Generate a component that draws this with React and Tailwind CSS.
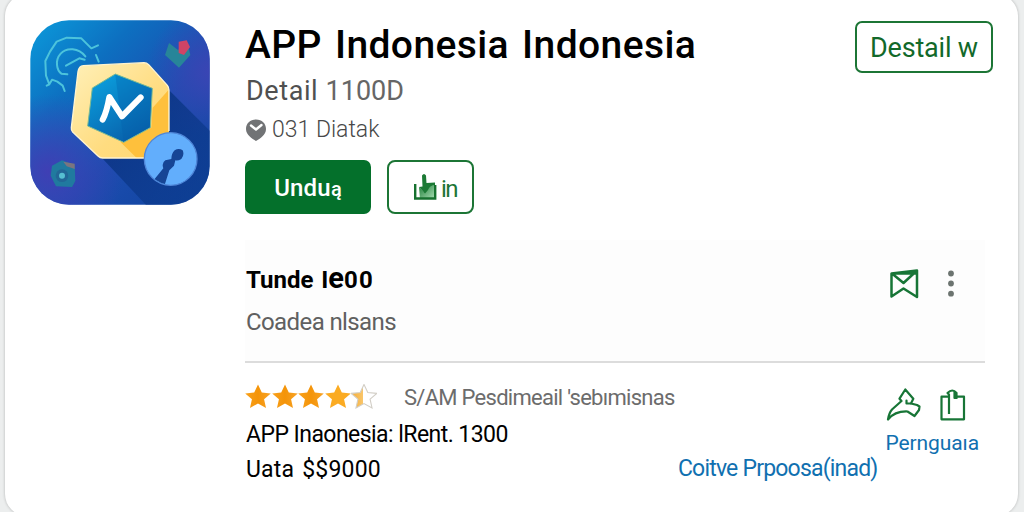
import React from "react";

function AppIcon() {
  return (
    <svg viewBox="30 29 540 555" className="mt-px h-[185px] w-[180px] shrink-0">
      <defs>
        <linearGradient id="bg" x1="0" y1="0" x2="1" y2="1">
          <stop offset="0" stopColor="#0b9bdb" />
          <stop offset="0.3" stopColor="#0d6fc0" />
          <stop offset="0.6" stopColor="#1c4db0" />
          <stop offset="1" stopColor="#0f439c" />
        </linearGradient>
        <radialGradient id="violet" cx="0.1" cy="0.82" r="0.42">
          <stop offset="0" stopColor="#3f3fb4" />
          <stop offset="1" stopColor="#3f3fb4" stopOpacity="0" />
        </radialGradient>
        <radialGradient id="violetRight" cx="1" cy="0.28" r="0.35">
          <stop offset="0" stopColor="#3a45b4" />
          <stop offset="1" stopColor="#3a45b4" stopOpacity="0" />
        </radialGradient>
        <linearGradient id="gold" x1="0" y1="0" x2="1" y2="1">
          <stop offset="0" stopColor="#fff0b8" />
          <stop offset="0.6" stopColor="#ffdc80" />
          <stop offset="1" stopColor="#ffd873" />
        </linearGradient>
        <linearGradient id="hex" x1="0" y1="0" x2="0.6" y2="1">
          <stop offset="0" stopColor="#0ba5e2" />
          <stop offset="1" stopColor="#0862ac" />
        </linearGradient>
        <linearGradient id="shade" x1="0" y1="0" x2="1" y2="1">
          <stop offset="0" stopColor="#0a327f" />
          <stop offset="1" stopColor="#0b3a8c" stopOpacity="0.5" />
        </linearGradient>
        <clipPath id="tile"><rect x="31" y="30" width="538" height="553" rx="116" /></clipPath>
        <clipPath id="ball"><circle cx="452" cy="446" r="77" /></clipPath>
      </defs>
      <g clipPath="url(#tile)">
        <rect x="30" y="29" width="540" height="555" fill="url(#bg)" />
        <rect x="30" y="29" width="540" height="555" fill="url(#violet)" />
        <rect x="30" y="29" width="540" height="555" fill="url(#violetRight)" />
        <path d="M446 238L570 362V584H378L246 443Z" fill="url(#shade)" />
        <g fill="none" stroke="#4cc3dc" strokeWidth="6" strokeLinecap="round" strokeLinejoin="round">
          <path d="M234 105L214 114L184 84L140 82L110 94L90 124L76 152L78 196L88 222L80 226M88 222L96 208L112 214L128 226L134 242" />
          <path d="M196 138C176 112 140 110 122 130C104 150 110 180 124 190L142 192" />
          <path d="M138 166L160 154L178 144L194 148M228 134L236 154" />
        </g>
        <path d="M447 98l26 20 32-8 6 24-34 38-42-38Z" fill="#278599" />
        <path d="M476 94l24-4 10 20-18 24-16-6Z" fill="#d04466" />
        <path d="M126 450l38 14 2 48-10 18-48-2-16-32 4-30Z" fill="#207a9f" />
        <path d="M130 454l34 6v16l-24-8Z" fill="#7b757f" />
        <circle cx="126" cy="496" r="19" fill="#226797" />
        <circle cx="126" cy="496" r="9" fill="#56bfd2" />
        <path d="M190 166l182-9q8 0 14 6l56 62q5 5 5 12v206H248q-8 0-14-6l-76-72q-5-5-4-13l20-168q3-17 16-18Z" fill="url(#gold)" />
        <path d="M446 238v205H350l-48-47 92-44 4-60Z" fill="#fec03c" />
        <path d="M447 362V240q0-9-5-15l-56-62q-6-6-14-6l-182 9q-13 1-16 18l-20 168q-1 8 4 13l76 72q6 6 14 6h126" fill="none" stroke="#fff4cf" strokeWidth="4" />
        <path d="M286 191l111 43-6 118-80 44-108-49 14-114Z" fill="url(#hex)" stroke="#7bb992" strokeWidth="3" />
        <path d="M286 193l109 42-6 115-78 44Z" fill="#045da9" opacity=".3" />
        <path d="M248 328q12-22 20-68l38 58 56-57" fill="none" stroke="#fff" strokeWidth="18" strokeLinecap="round" strokeLinejoin="round" />
        <circle cx="452" cy="446" r="79" fill="#62aefc" stroke="#4f86d8" strokeWidth="4" />
        <g clipPath="url(#ball)">
          <path d="M396 516L430 474Q424 458 436 450L454 446Q454 430 464 420Q476 412 488 420Q494 434 484 446Q474 452 466 450L462 466L448 480L432 530Z" fill="#164595" />
        </g>
      </g>
    </svg>
  );
}

const STAR = "M12 .4l3.500 7.700 8.300.9-6.200 5.600 1.800 8.400-7.400-4.300-7.400 4.300 1.800-8.400L.2 9l8.300-.9z";

function Stars() {
  return (
    <div className="flex w-[133px] gap-[0.5px]">
      <svg width="0" height="0" className="absolute">
        <defs>
          <linearGradient id="full" x1="0" x2="1">
            <stop offset="0" stopColor="#f9a11b" />
            <stop offset="0.5" stopColor="#f49409" />
            <stop offset="1" stopColor="#f8a325" />
          </linearGradient>
          <linearGradient id="half" x1="0" x2="1">
            <stop offset="0" stopColor="#f6ad32" />
            <stop offset="0.45" stopColor="#f9c56a" />
            <stop offset="0.46" stopColor="#fff" />
          </linearGradient>
        </defs>
      </svg>
      {[0, 1, 2, 3, 4].map((i) => (
        <svg key={i} viewBox="0 0 24 24" preserveAspectRatio="none" className="h-[25px] w-[26px]">
          <path
            d={STAR}
            fill={i === 4 ? "url(#half)" : i === 3 ? "#fbab22" : "url(#full)"}
            stroke={i === 4 ? "#d2cec6" : "none"}
            strokeWidth="1"
          />
        </svg>
      ))}
    </div>
  );
}

export default function App() {
  return (
    <div className="flex h-[512px] w-[1024px] overflow-hidden bg-[#eceeee] pl-[5px] font-['Roboto','Liberation_Sans',sans-serif]">
      <main className="-mt-[6px] flex h-[522px] w-[1013px] shrink-0 rounded-[22px] bg-white pl-[25px] pr-[25px] pt-[25px] shadow-[0_0_3px_rgba(0,0,0,0.25)]">
        <AppIcon />
        <div className="ml-[35px] flex w-[748px] shrink-0 flex-col whitespace-nowrap">
          <header className="flex h-[141px] justify-between pt-[2px]">
            <div>
              <h1 className="h-[51px] text-[39px] font-medium leading-[48px] tracking-[0.4px] text-black [word-spacing:3px]">APP Indonesia Indonesia</h1>
              <p className="h-[43px] pl-px text-[27px] leading-[38px] tracking-[0.6px] text-[#505050]">
                Detail <span className="tracking-[0px] text-[#666]">1100D</span>
              </p>
              <p className="flex items-center pt-px text-[23px] leading-[28px] text-[#777]">
                <svg viewBox="0 0 22 22" className="mr-[5px] h-[22px] w-[22px]">
                  <path d="M11 .5C17 .5 21 4.500 21 10c0 6-6 9.500-10 12C7 19.500 1 16 1 10 1 4.500 5 .5 11 .5Z" fill="#717375" />
                  <path d="M6 6.500l5 4 5.500-4.500" fill="none" stroke="#fff" strokeWidth="2.400" strokeLinecap="round" strokeLinejoin="round" />
                </svg>
                <span className="font-light text-[#484848]">031 Diatak</span>
              </p>
            </div>
            <button className="h-[52px] w-[138px] rounded-[7px] border-2 border-[#1c7535] text-[27px] leading-[50px] tracking-[-0.2px] text-[#12692a]">Destail w</button>
          </header>
          <div className="flex gap-[16px]">
            <button className="h-[54px] w-[126px] rounded-[7px] bg-[#04702b] text-[24px] font-medium leading-[56px] tracking-[0.2px] text-white">
              Undu<span className="text-[20px]">ą</span>
            </button>
            <button className="flex h-[54px] w-[87px] items-center justify-center rounded-[8px] border-2 border-[#1c7535] pl-[9px] text-[24px] text-[#1c7535]">
              <svg viewBox="0 0 24 28" className="mb-[3px] h-[28px] w-[24px]">
                <defs>
                  <linearGradient id="thumb" x1="0" y1="0" x2="1" y2="1">
                    <stop offset="0" stopColor="#187a33" />
                    <stop offset="1" stopColor="#a9deb4" />
                  </linearGradient>
                </defs>
                <path d="M6 15l5 5 5-9h6v16H7Z" fill="url(#thumb)" />
                <path d="M2.200 12v14.500h20V13" fill="none" stroke="#17712f" strokeWidth="2.400" />
                <path d="M9 3.500q2-3 4 0l.5 7.500 8.500-.5V13q-5 0-7 5l-3 3.500L6 15l3.500-.5Z" fill="#1c7a35" />
              </svg>
              <span className="ml-[4px] pt-[3px] tracking-[-1.500px]">in</span>
            </button>
          </div>
          <section className="mt-[26px] flex h-[123px] w-[740px] justify-between border-b-2 border-[#dcdcdc] bg-[#fdfdfd] pl-px pt-[24px]">
            <div>
              <h2 className="h-[44px] text-[24px] font-bold leading-[32px] text-black [word-spacing:2px]">
                Tunde I<span className="text-[29px] leading-none">e</span>
                <span className="tracking-[1.2px]">00</span>
              </h2>
              <p className="text-[24px] leading-[28px] tracking-[-0.6px] text-[#606060]">Coadea nlsans</p>
            </div>
            <div className="mr-[31px] flex h-[40px] items-center gap-[29px]">
              <svg viewBox="0 0 30 30" className="h-[30px] w-[30px]" fill="none" stroke="#177536" strokeWidth="2.500" strokeLinejoin="round" strokeLinecap="round">
                <path d="M2.500 4.500L28 1.500V28L14.500 19.500 2.500 27.500ZM3 4.500l11.500 9.500L28 1.500M3 4.500l24 0" />
              </svg>
              <svg viewBox="0 0 6 28" className="h-[28px] w-[6px]" fill="#6c7470">
                <circle cx="3" cy="3.500" r="2.900" /><circle cx="3" cy="13.500" r="2.900" /><circle cx="3" cy="23.700" r="2.900" />
              </svg>
            </div>
          </section>
          <section className="flex h-[140px] w-[740px] justify-between pl-px pt-[17px]">
            <div>
              <div className="flex h-[38px] items-start">
                <div className="-ml-px pt-[4px]"><Stars /></div>
                <p className="ml-[26px] text-[22px] leading-[35px] tracking-[-0.72px] text-[#6c6c6c]">S/AM Pesdimeail 'sebımisnas</p>
              </div>
              <p className="text-[23px] leading-[34px] tracking-[-0.55px] text-black">APP Inaonesia: lRent. 1300</p>
              <p className="text-[23px] leading-[35px] tracking-[0.2px] text-black [word-spacing:2px]">Uata $$9000</p>
            </div>
            <div className="mr-[6px] flex">
              <a className="mr-[8px] mt-[71px] text-[23px] leading-[35px] tracking-[-0.8px] text-[#1070b0]">Coitve Prpoosa(inad)</a>
              <div className="pt-[8px]">
                <div className="flex h-[41px] gap-[18px]">
                  <svg viewBox="0 0 36 34" className="h-[34px] w-[36px]" fill="none" stroke="#177536" strokeWidth="2.200" strokeLinejoin="round" strokeLinecap="round">
                    <path d="M2 31.500Q3 25 6 21.500L15.500 13L13.500 10.700L19.300 1.500L27.300 10.700L25 15.500L31 17L33.500 18.500L33 22L28.500 28L21.500 23.500Q9 23 2 31.500Z" />
                    <path d="M20.500 12.500v3h4" />
                  </svg>
                  <svg viewBox="0 0 26 34" className="h-[34px] w-[26px]" fill="none" stroke="#177536" strokeWidth="2.200" strokeLinejoin="round">
                    <path d="M9 8.700H1.500V31.300H24V8.700h-7.500M9 26V6.500L7.500 5q5-5 9 0v5M14.500 4v6h3" />
                  </svg>
                </div>
                <a className="block text-[21px] leading-[28px] tracking-[-0.1px] text-[#1070b0]">Pernguaıa</a>
              </div>
            </div>
          </section>
        </div>
      </main>
    </div>
  );
}
